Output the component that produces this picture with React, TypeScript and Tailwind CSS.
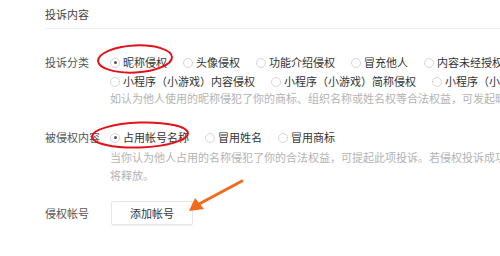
import React from "react";

function Radio({ checked }: { checked?: boolean }) {
  return (
    <span className="w-[10px] h-[10px] rounded-full border border-[#d6d6d6] bg-white flex items-center justify-center shrink-0">
      {checked && <span className="w-[3px] h-[3px] rounded-full bg-[#555]" />}
    </span>
  );
}

function Opt({ label, checked }: { label: string; checked?: boolean }) {
  return (
    <div className="flex items-center gap-[3px] shrink-0">
      <Radio checked={checked} />
      <span className="text-[#333] whitespace-nowrap">{label}</span>
    </div>
  );
}

export default function App() {
  return (
    <div
      className="relative w-[500px] h-[256px] overflow-hidden bg-white pl-[45px] text-[11px]"
      style={{ fontFamily: '"Noto Sans CJK SC", "Noto Sans", sans-serif' }}
    >
      <div className="h-[29px] flex items-center border-b border-[#ededed] text-[#444]">
        投诉内容
      </div>

      <div className="mt-[24px] flex">
        <div className="w-[65px] shrink-0 leading-[19px] text-[#555]">投诉分类</div>
        <div className="flex flex-col min-w-0">
          <div className="flex gap-[16px] leading-[19px]">
            <Opt label="昵称侵权" checked />
            <Opt label="头像侵权" />
            <Opt label="功能介绍侵权" />
            <Opt label="冒充他人" />
            <Opt label="内容未经授权" />
          </div>
          <div className="flex gap-[16px] leading-[19px]">
            <Opt label="小程序（小游戏）内容侵权" />
            <Opt label="小程序（小游戏）简称侵权" />
            <Opt label="小程序（小游戏）名称侵权" />
          </div>
          <div className="mt-[-1px] leading-[16px] text-[#b3b3b3] whitespace-nowrap">
            如认为他人使用的昵称侵犯了你的商标、组织名称或姓名权等合法权益，可发起昵称侵权投诉。
          </div>
        </div>
      </div>

      <div className="mt-[22px] flex">
        <div className="w-[65px] shrink-0 leading-[19px] text-[#555] whitespace-nowrap">被侵权内容</div>
        <div className="flex flex-col min-w-0">
          <div className="flex gap-[16px] leading-[19px]">
            <Opt label="占用帐号名称" checked />
            <Opt label="冒用姓名" />
            <Opt label="冒用商标" />
          </div>
          <div className="mt-[1px] leading-[18px] text-[#b3b3b3] whitespace-nowrap">
            当你认为他人占用的名称侵犯了你的合法权益，可提起此项投诉。若侵权投诉成功，被占用的帐号名称
          </div>
          <div className="leading-[18px] text-[#b3b3b3]">将释放。</div>
        </div>
      </div>

      <div className="mt-[17px] flex items-center">
        <div className="w-[66px] shrink-0 text-[#555]">侵权帐号</div>
        <button className="w-[82px] h-[24px] border border-[#e8e8e8] rounded-[2px] bg-white text-[#333] text-[11px] shadow-[0_1px_2px_rgba(0,0,0,0.06)]">
          添加帐号
        </button>
      </div>

      <svg className="absolute left-0 top-0 pointer-events-none" width="500" height="256">
        <ellipse cx="135" cy="59" rx="37" ry="13.5" fill="none" stroke="#e3121a" strokeWidth="2" transform="rotate(-3 135 59)" />
        <ellipse cx="140" cy="135" rx="48" ry="12.5" fill="none" stroke="#e3121a" strokeWidth="2" transform="rotate(-2 140 135)" />
        <line x1="242" y1="181" x2="199" y2="204" stroke="#f26a1b" strokeWidth="3" strokeLinecap="round" />
        <polygon points="189,211 195,198 204,209" fill="#f26a1b" />
      </svg>
    </div>
  );
}
